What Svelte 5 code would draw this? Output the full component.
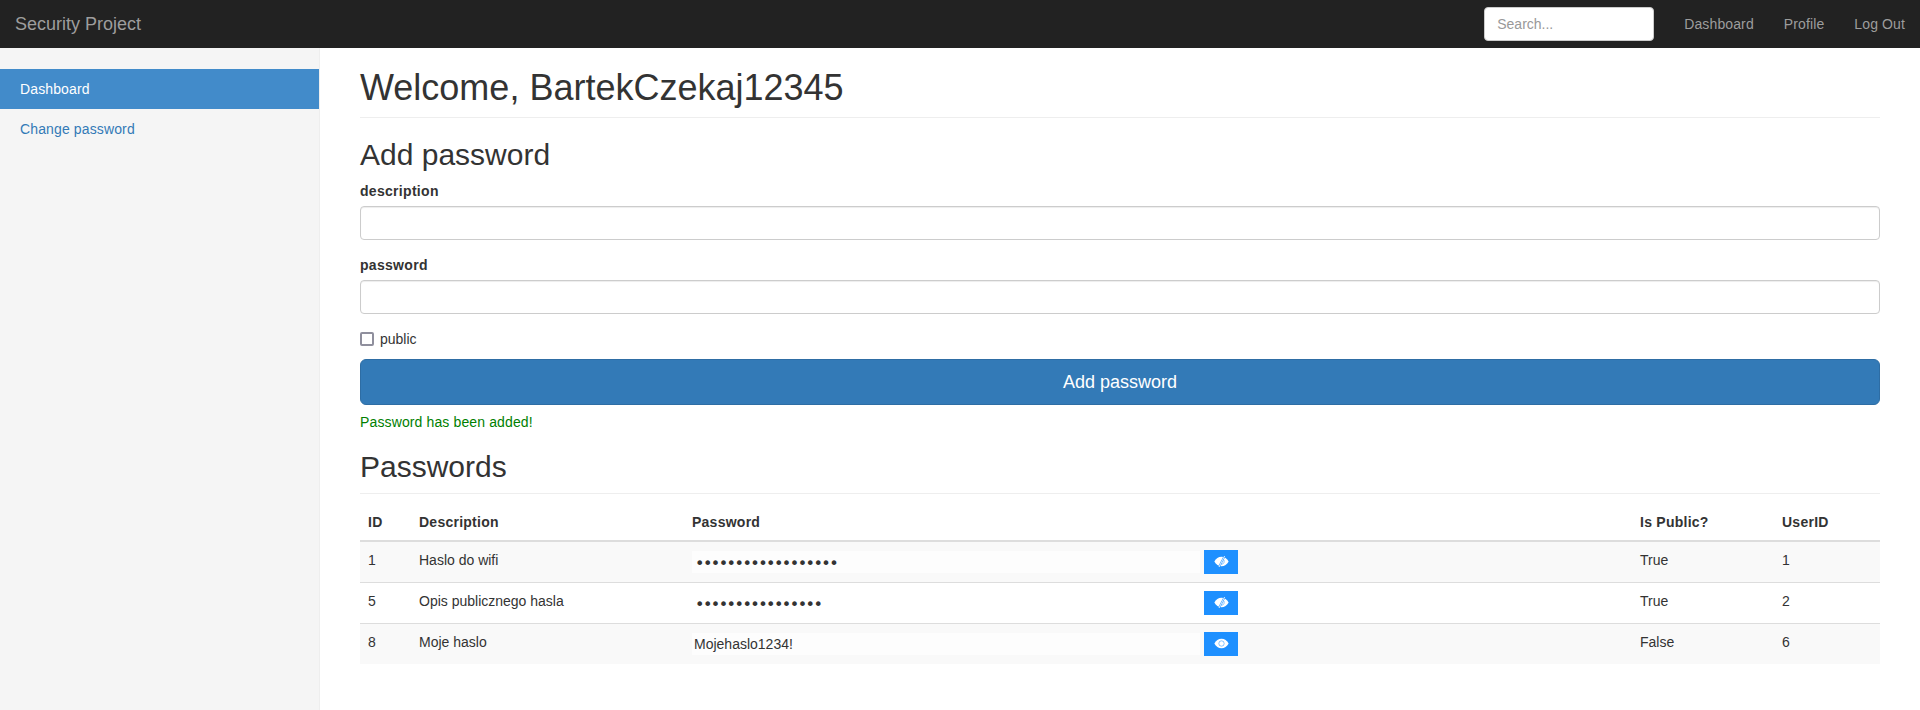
<script>
	const rows = [
		{ id: 1, description: "Haslo do wifi", password: "wifihaslo123456789", visible: false, isPublic: "True", userId: 1 },
		{ id: 5, description: "Opis publicznego hasla", password: "publicznehaslo12", visible: false, isPublic: "True", userId: 2 },
		{ id: 8, description: "Moje haslo", password: "Mojehaslo1234!", visible: true, isPublic: "False", userId: 6 }
	];
</script>

<nav class="navbar">
	<a class="brand" href="#top">Security Project</a>
	<div class="navbar-right">
		<input class="search" type="text" placeholder="Search..." />
		<ul class="nav-links">
			<li><a href="#top">Dashboard</a></li>
			<li><a href="#top">Profile</a></li>
			<li><a href="#top">Log Out</a></li>
		</ul>
	</div>
</nav>

<div class="layout">
	<aside class="sidebar">
		<a class="side-link active" href="#top">Dashboard</a>
		<a class="side-link" href="#top">Change password</a>
	</aside>

	<main class="main">
		<h1 class="page-header">Welcome, BartekCzekaj12345</h1>

		<h2 class="form-title">Add password</h2>
		<form>
			<div class="form-group">
				<label for="description">description</label>
				<input id="description" class="form-control" type="text" />
			</div>
			<div class="form-group">
				<label for="password">password</label>
				<input id="password" class="form-control" type="password" />
			</div>
			<div class="checkbox">
				<input id="public" type="checkbox" />
				<label for="public">public</label>
			</div>
			<button class="btn-add" type="button">Add password</button>
		</form>
		<p class="success">Password has been added!</p>

		<h2 class="page-header section">Passwords</h2>
		<table>
			<colgroup>
				<col style="width: 51px" />
				<col style="width: 273px" />
				<col style="width: 948px" />
				<col style="width: 142px" />
				<col style="width: 106px" />
			</colgroup>
			<thead>
				<tr>
					<th>ID</th>
					<th>Description</th>
					<th>Password</th>
					<th>Is Public?</th>
					<th>UserID</th>
				</tr>
			</thead>
			<tbody>
				{#each rows as row}
					<tr>
						<td>{row.id}</td>
						<td>{row.description}</td>
						<td>
							<div class="password-cell">
								<input
									class="password-field"
									type={row.visible ? "text" : "password"}
									value={row.password}
									readonly
								/>
								<button class="btn-eye" type="button" aria-label="Toggle password">
									<svg viewBox="0 0 576 432" width="15" height="11">
										<path d="M8 216C70 90 170 30 288 30S506 90 568 216C506 342 406 402 288 402S70 342 8 216z" fill="#fff" />
										{#if row.visible}
											<circle cx="288" cy="216" r="105" fill="none" stroke="#1e90ff" stroke-width="28" opacity="0.75" />
										{:else}
											<path d="M340 125A105 105 0 0 1 255 316" fill="none" stroke="#1e90ff" stroke-width="28" opacity="0.75" />
											<path d="M410 0 190 432" stroke="#1e90ff" stroke-width="70" fill="none" />
											<path d="M410 0 190 432" stroke="#fff" stroke-width="36" fill="none" />
										{/if}
									</svg>
								</button>
							</div>
						</td>
						<td>{row.isPublic}</td>
						<td>{row.userId}</td>
					</tr>
				{/each}
			</tbody>
		</table>
	</main>
</div>

<style>
	:global(body) {
		font-family: "Liberation Sans", Arial, sans-serif;
		font-size: 14px;
		line-height: 20px;
		color: #333;
		background: #fff;
	}

	* {
		box-sizing: border-box;
	}

	a {
		text-decoration: none;
	}

	.navbar {
		display: flex;
		align-items: center;
		justify-content: space-between;
		height: 48px;
		background: #222;
	}

	.brand {
		padding-left: 15px;
		font-size: 18px;
		color: #9d9d9d;
	}

	.navbar-right {
		display: flex;
		align-items: center;
	}

	.search {
		width: 170px;
		height: 34px;
		padding: 6px 12px;
		border: 1px solid #ccc;
		border-radius: 4px;
		font: inherit;
		color: #555;
		margin-right: 15px;
	}

	.search::placeholder {
		color: #999;
	}

	.nav-links {
		display: flex;
		margin: 0;
		padding: 0;
		list-style: none;
		letter-spacing: 0.12px;
	}

	.nav-links a {
		display: block;
		padding: 14px 15px;
		color: #9d9d9d;
	}

	.layout {
		display: flex;
		min-height: calc(100vh - 48px);
	}

	.sidebar {
		flex: 0 0 320px;
		padding-top: 21px;
		background: #f5f5f5;
		border-right: 1px solid #eee;
	}

	.side-link {
		display: block;
		padding: 10px 20px;
		color: #337ab7;
		letter-spacing: 0.13px;
	}

	.side-link.active {
		background: #428bca;
		color: #fff;
	}

	.main {
		flex: 1;
		min-width: 0;
		padding: 20px 40px 0;
	}

	h1,
	h2 {
		margin: 0;
		font-weight: 500;
		line-height: 1.1;
	}

	h1 {
		font-size: 36px;
	}

	h2 {
		font-size: 30px;
	}

	.page-header {
		padding-bottom: 9px;
		border-bottom: 1px solid #eee;
		margin-bottom: 20px;
	}

	.form-title {
		margin-bottom: 10px;
	}

	.form-group {
		margin-bottom: 15px;
	}

	.form-group label {
		display: block;
		margin-bottom: 5px;
		font-weight: 700;
		letter-spacing: 0.3px;
	}

	.form-control {
		display: block;
		width: 100%;
		height: 34px;
		padding: 6px 12px;
		border: 1px solid #ccc;
		border-radius: 4px;
		box-shadow: inset 0 1px 1px rgba(0, 0, 0, 0.075);
		font: inherit;
		color: #555;
	}

	.checkbox {
		display: flex;
		align-items: center;
		margin-bottom: 10px;
	}

	.checkbox input {
		appearance: none;
		width: 14px;
		height: 14px;
		margin: 1px 6px 0 0;
		border: 2px solid #8f8f9d;
		border-radius: 2px;
		background: #fff;
	}

	.btn-add {
		display: block;
		width: 100%;
		height: 46px;
		padding: 10px 16px;
		border: 1px solid #2e6da4;
		border-radius: 6px;
		background: #337ab7;
		color: #fff;
		font: inherit;
		font-size: 18px;
	}

	.success {
		margin: 7px 0 0;
		color: #008000;
		letter-spacing: 0.13px;
	}

	.section {
		margin-top: 18px;
		padding-bottom: 10px;
		margin-bottom: 10px;
	}

	table {
		width: 100%;
		table-layout: fixed;
		border-collapse: collapse;
	}

	th,
	td {
		padding: 8px;
		text-align: left;
		vertical-align: top;
		border-top: 1px solid #ddd;
	}

	th {
		border-top: 0;
		border-bottom: 2px solid #ddd;
		letter-spacing: 0.25px;
	}

	tbody tr:first-child td {
		border-top: 0;
	}

	tbody tr:nth-child(odd) {
		background: #f9f9f9;
	}

	.password-cell {
		display: flex;
		align-items: flex-start;
		gap: 4px;
	}

	.password-field {
		width: 508px;
		height: 22px;
		margin-top: 1px;
		padding: 1px 2px;
		border: 0;
		background: rgba(255, 255, 255, 0.6);
		font: inherit;
		color: #333;
		outline: none;
	}

	.password-field[type="password"] {
		padding: 3px 2px 0 3px;
		font-family: "DejaVu Sans", sans-serif;
		font-size: 16px;
		letter-spacing: -1.54px;
	}

	.btn-eye {
		display: flex;
		align-items: center;
		justify-content: center;
		width: 34px;
		height: 24px;
		padding: 0;
		border: 0;
		background: #1e90ff;
	}
</style>
